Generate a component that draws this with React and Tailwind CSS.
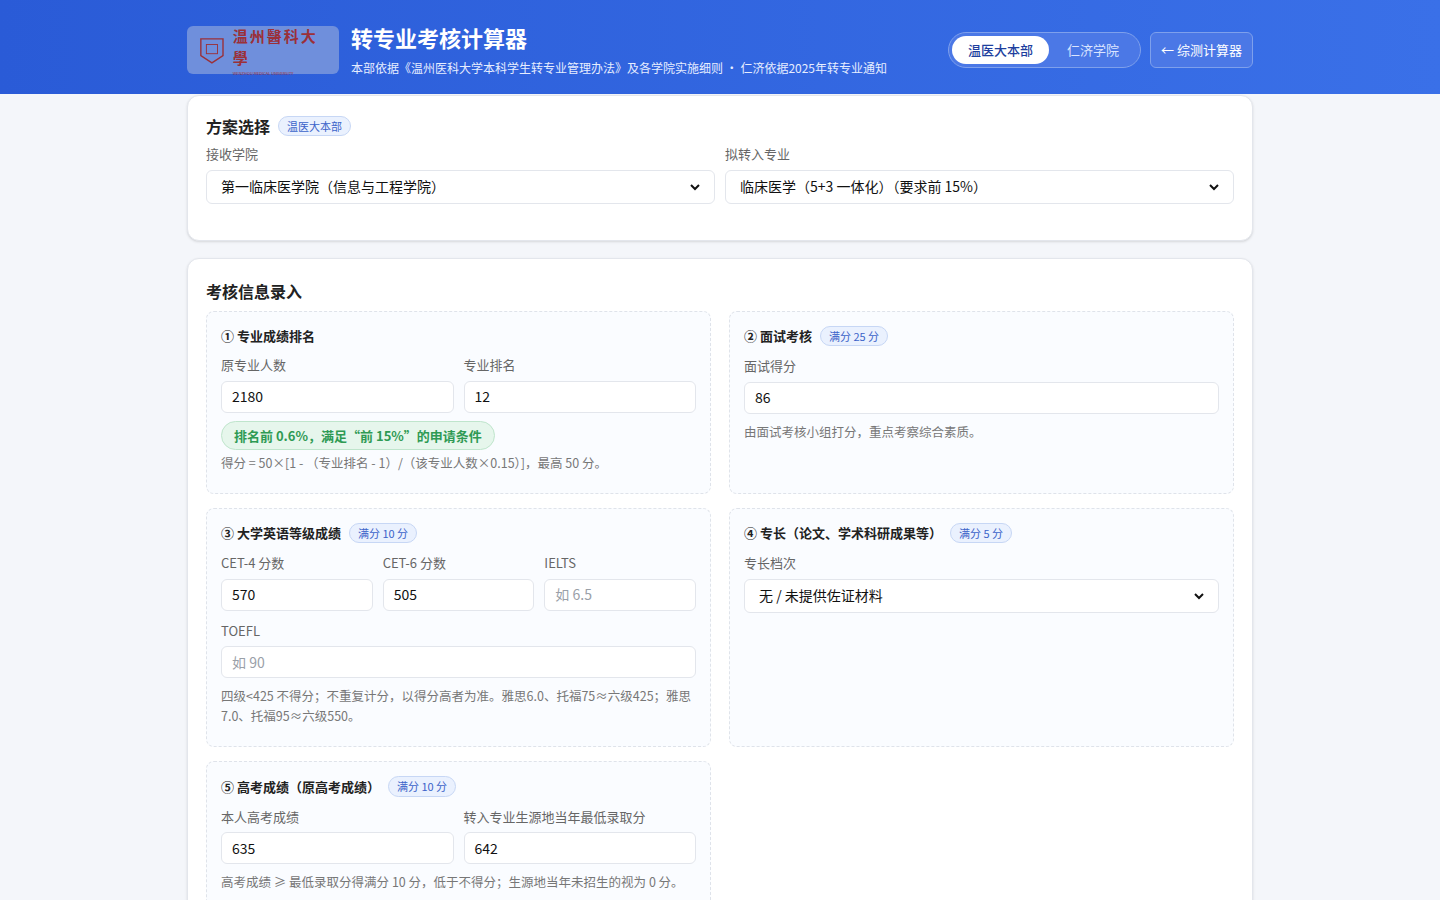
const F = { fontFamily: '"Noto Sans CJK SC","Noto Sans",sans-serif' };

function Badge({ children }) {
  return <span className="ml-2 rounded-full border border-[#c7d7f5] bg-[#eaf1fe] px-2 py-[1px] text-[11px] font-normal text-[#3b63c9]">{children}</span>;
}
function Input({ value, ph }) {
  return <div className={`h-[32px] rounded-md border border-[#e3e6ec] bg-white px-[10px] flex items-center text-[14px] ${value ? 'text-[#111]' : 'text-[#9aa0a8]'}`}>{value || ph}</div>;
}
function Select({ value }) {
  return <div className="h-[34px] rounded-md border border-[#e3e6ec] bg-white px-[14px] flex items-center justify-between text-[14px] text-[#111]">
    <span>{value}</span>
    <svg width="10" height="8" viewBox="0 0 10 8"><path d="M1 2l4 4 4-4" stroke="#111" strokeWidth="2" fill="none" /></svg>
  </div>;
}
function Label({ children }) { return <div className="text-[13px] text-[#666] mb-[6px]">{children}</div>; }
function Sub({ title, badge, children, h }) {
  return <div className={`rounded-lg border border-dashed border-[#dfe3ea] bg-[#fafcff] px-[14px] pt-[14px] pb-[20px] ${h || ''}`}>
    <div className="flex items-center text-[13px] font-bold text-[#222] mb-[10px]">{title}{badge && <Badge>{badge}</Badge>}</div>
    {children}
  </div>;
}
function Note({ children }) { return <div className="text-[12.5px] text-[#777] mt-[8px] leading-[20px]">{children}</div>; }

export default function App() {
  return <div style={F} className="min-h-[900px] bg-[#f4f6fa]">
    <div className="h-[94px] bg-gradient-to-r from-[#2a5bd7] to-[#3a70e8]">
      <div className="mx-auto w-[1066px] flex items-center pt-[23px]">
        <div className="w-[152px] h-[48px] rounded-md bg-[#6f8fdc] flex items-center px-[12px] gap-2">
          <svg width="28" height="32" viewBox="0 0 28 32"><path d="M2 4h24v18l-12 8-12-8z" fill="none" stroke="#9b3038" strokeWidth="1.5"/><rect x="8" y="10" width="12" height="10" fill="none" stroke="#9b3038"/></svg>
          <div className="flex flex-col">
            <span className="text-[15px] text-[#9b3038] font-bold tracking-[2px]" style={{ fontFamily: '"Noto Sans CJK SC",serif' }}>温州醫科大學</span>
            <span className="text-[4px] text-[#9b3038]">WENZHOU MEDICAL UNIVERSITY</span>
          </div>
        </div>
        <div className="ml-[12px] text-white">
          <div className="text-[22px] font-bold leading-[28px]">转专业考核计算器</div>
          <div className="text-[12px] mt-[8px] text-[#e6edff]">本部依据《温州医科大学本科学生转专业管理办法》及各学院实施细则 · 仁济依据2025年转专业通知</div>
        </div>
        <div className="ml-auto flex items-center gap-[9px]">
          <div className="h-[36px] rounded-full border border-[#7ea0ec] bg-[#4b78e6] p-[3px] flex items-center">
            <span className="h-[28px] px-[16px] rounded-full bg-white text-[#1e3f9e] text-[13px] font-medium flex items-center">温医大本部</span>
            <span className="px-[18px] text-[13px] text-[#dbe5ff]">仁济学院</span>
          </div>
          <div className="h-[36px] px-[10px] rounded-md border border-[#7ea0ec] bg-[#4b78e6] text-white text-[13px] flex items-center">← 综测计算器</div>
        </div>
      </div>
    </div>
    <div className="mx-auto w-[1066px] flex flex-col gap-[17px] pt-[1px]">
      <div className="rounded-xl bg-white border border-[#e3e6ec] px-[18px] pt-[18px] pb-[36px] shadow-sm">
        <div className="flex items-center text-[16px] font-bold text-[#222] mb-[6px]">方案选择<Badge>温医大本部</Badge></div>
        <div className="grid grid-cols-2 gap-[10px]">
          <div><Label>接收学院</Label><Select value="第一临床医学院（信息与工程学院）" /></div>
          <div><Label>拟转入专业</Label><Select value="临床医学（5+3 一体化）（要求前 15%）" /></div>
        </div>
      </div>
      <div className="rounded-xl bg-white border border-[#e3e6ec] px-[18px] pt-[20px] pb-[8px] shadow-sm">
        <div className="text-[16px] font-bold text-[#222] mb-[8px]">考核信息录入</div>
        <div className="grid grid-cols-2 gap-x-[18px] gap-y-[14px]">
          <Sub title="① 专业成绩排名">
            <div className="grid grid-cols-2 gap-[10px]">
              <div><Label>原专业人数</Label><Input value="2180" /></div>
              <div><Label>专业排名</Label><Input value="12" /></div>
            </div>
            <div className="mt-[8px] inline-block rounded-full border border-[#bfe5cc] bg-[#e6f6ec] px-[12px] py-[4px] text-[13px] font-bold text-[#2f9a54]">排名前 0.6%，满足“前 15%”的申请条件</div>
            <div className="text-[12.5px] text-[#777] mt-[4px]">得分 = 50×[1 - （专业排名 - 1）/（该专业人数×0.15）]，最高 50 分。</div>
          </Sub>
          <Sub title="② 面试考核" badge="满分 25 分">
            <Label>面试得分</Label><Input value="86" />
            <Note>由面试考核小组打分，重点考察综合素质。</Note>
          </Sub>
          <Sub title="③ 大学英语等级成绩" badge="满分 10 分">
            <div className="grid grid-cols-3 gap-[10px]">
              <div><Label>CET-4 分数</Label><Input value="570" /></div>
              <div><Label>CET-6 分数</Label><Input value="505" /></div>
              <div><Label>IELTS</Label><Input ph="如 6.5" /></div>
            </div>
            <div className="mt-[10px]"><Label>TOEFL</Label><Input ph="如 90" /></div>
            <Note>四级&lt;425 不得分；不重复计分，以得分高者为准。雅思6.0、托福75≈六级425；雅思7.0、托福95≈六级550。</Note>
          </Sub>
          <Sub title="④ 专长（论文、学术科研成果等）" badge="满分 5 分">
            <Label>专长档次</Label><Select value="无 / 未提供佐证材料" />
          </Sub>
          <Sub title="⑤ 高考成绩（原高考成绩）" badge="满分 10 分">
            <div className="grid grid-cols-2 gap-[10px]">
              <div><Label>本人高考成绩</Label><Input value="635" /></div>
              <div><Label>转入专业生源地当年最低录取分</Label><Input value="642" /></div>
            </div>
            <Note>高考成绩 ≥ 最低录取分得满分 10 分，低于不得分；生源地当年未招生的视为 0 分。</Note>
          </Sub>
        </div>
      </div>
    </div>
  </div>;
}
